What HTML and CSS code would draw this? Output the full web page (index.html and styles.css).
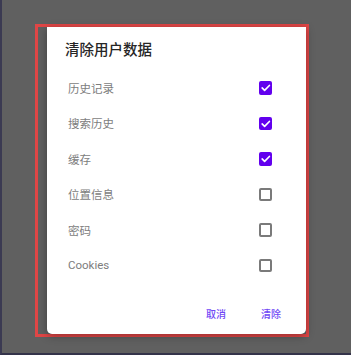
FILE: index.html
```html
<!DOCTYPE html>
<html lang="zh">
<head>
<meta charset="utf-8">
<link rel="stylesheet" href="styles.css">
</head>
<body>
<div class="screen">
  <div class="highlight">
    <div class="dialog">
      <div class="title">清除用户数据</div>
      <ul class="options">
        <li class="option"><span class="label">历史记录</span><span class="check on"><svg viewBox="0 0 13 13"><polyline points="3,6.7 5.4,9 10,4.3"/></svg></span></li>
        <li class="option"><span class="label">搜索历史</span><span class="check on"><svg viewBox="0 0 13 13"><polyline points="3,6.7 5.4,9 10,4.3"/></svg></span></li>
        <li class="option"><span class="label">缓存</span><span class="check on"><svg viewBox="0 0 13 13"><polyline points="3,6.7 5.4,9 10,4.3"/></svg></span></li>
        <li class="option"><span class="label">位置信息</span><span class="check"></span></li>
        <li class="option"><span class="label">密码</span><span class="check"></span></li>
        <li class="option"><span class="label">Cookies</span><span class="check"></span></li>
      </ul>
      <div class="actions">
        <button class="btn">取消</button>
        <button class="btn">清除</button>
      </div>
    </div>
  </div>
</div>
</body>
</html>
```
FILE: styles.css
```css
html, body {
  margin: 0;
  padding: 0;
}
body {
  width: 351px;
  height: 355px;
  overflow: hidden;
  background: #606060;
  font-family: Roboto, "Noto Sans CJK SC", sans-serif;
}
.screen {
  box-sizing: border-box;
  width: 351px;
  height: 355px;
  border-left: 2px solid #3b3a52;
  border-bottom: 2px solid #34334a;
  padding: 24px 0 0 33px;
}
.highlight {
  box-sizing: border-box;
  width: 274px;
  height: 313px;
  border: 3px solid #e04646;
  padding: 0 0 0 9px;
}
.dialog {
  box-sizing: border-box;
  width: 259px;
  height: 307px;
  background: #fff;
  border-radius: 0 0 5px 5px;
  box-shadow: 0 2px 8px rgba(0,0,0,0.35);
  padding: 14px 0 0 0;
  display: flex;
  flex-direction: column;
}
.title {
  font-size: 14.5px;
  line-height: 20px;
  height: 20px;
  font-weight: 500;
  color: #262626;
  padding-left: 18px;
}
.options {
  list-style: none;
  margin: 9px 0 0 0;
  padding: 0 34px 0 21px;
}
.option {
  height: 35.5px;
  display: flex;
  align-items: center;
  justify-content: space-between;
}
.label {
  font-size: 11.5px;
  color: #7d7d7d;
}
.check {
  box-sizing: border-box;
  width: 13.5px;
  height: 13.5px;
  border: 2px solid #7a7a7a;
  border-radius: 2px;
  display: block;
}
.check.on {
  background: #6200ee;
  border-color: #6200ee;
  position: relative;
}
.check svg {
  position: absolute;
  left: -2px;
  top: -2px;
  width: 13.5px;
  height: 13.5px;
  fill: none;
  stroke: #fff;
  stroke-width: 1.6;
  stroke-linecap: round;
  stroke-linejoin: round;
}
.actions {
  margin-top: 15px;
  display: flex;
  justify-content: flex-end;
  gap: 11px;
  padding-right: 13px;
}
.btn {
  border: 0;
  background: transparent;
  font-family: Roboto, "Noto Sans CJK SC", sans-serif;
  font-size: 10px;
  font-weight: 500;
  color: #7048f5;
  height: 30px;
  padding: 0 12px;
}
```
